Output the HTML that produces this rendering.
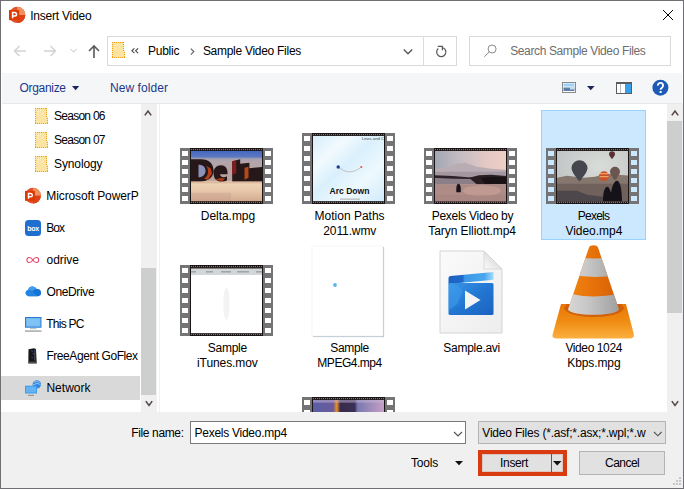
<!DOCTYPE html>
<html>
<head>
<meta charset="utf-8">
<title>Insert Video</title>
<style>
*{box-sizing:border-box;margin:0;padding:0}
html,body{width:684px;height:489px;overflow:hidden;background:#fff}
body{font-family:"Liberation Sans",sans-serif;font-size:12px;color:#000;position:relative}
.abs{position:absolute}
svg{position:absolute;overflow:visible}
.t{position:absolute;white-space:nowrap;line-height:16px;height:16px}
#win{position:absolute;left:0;top:0;width:684px;height:489px;border:1px solid #707074;background:#fff}
#toolbar{position:absolute;left:2px;top:73px;width:680px;height:31px;background:#f5f6f7;border-bottom:1px solid #e6e7e8}
#bottom{position:absolute;left:1px;top:412px;width:682px;height:76px;background:#f0f0f0}
.btn{position:absolute;background:#e1e1e1;border:1px solid #b4b4b4}
</style>
</head>
<body>
<div id="win"></div>
<div id="toolbar"></div>
<div id="bottom"></div>

<!-- title bar -->
<svg style="left:9px;top:7px" width="17" height="17" viewBox="0 0 17 17">
  <circle cx="8.200" cy="7.900" r="8.100" fill="#e2502a"/>
  <path d="M8.200 -.2A8.100 8.100 0 0 1 16.300 7.900H8.200Z" fill="#f0925e"/>
  <path d="M8.200 7.900H16.300A8.100 8.100 0 0 1 8.200 16Z" fill="#dc4418"/>
  <rect x="0" y="3" width="10.200" height="10.200" fill="#de3a04"/>
  <path d="M3.600 11.200V5.600h2.200a1.750 1.750 0 0 1 0 3.500H3.600" fill="none" stroke="#fff" stroke-width="1.500"/>
</svg>
<svg style="left:662px;top:9px" width="12" height="12" viewBox="0 0 12 12"><path d="M1 1L11 11M11 1L1 11" stroke="#000" stroke-width="1" fill="none"/></svg>

<!-- nav row -->
<svg style="left:12px;top:43px" width="92" height="16" viewBox="0 0 92 16" fill="none">
  <path d="M14 8H2.500M7.500 3L2.500 8l5 5" stroke="#d3d3d3" stroke-width="1.500"/>
  <path d="M32 8h11.500M38.500 3l5 5-5 5" stroke="#d3d3d3" stroke-width="1.500"/>
  <path d="M58.500 6l3 3 3-3" stroke="#d8d8d8" stroke-width="1.100"/>
  <path d="M82 15V3M77 8l5-5 5 5" stroke="#5c5c5c" stroke-width="1.650"/>
</svg>
<div class="abs" style="left:107px;top:36px;width:350px;height:30px;border:1px solid #d9d9d9;background:#fff"></div>
<div class="abs" style="left:423px;top:37px;width:1px;height:28px;background:#dcdcdc"></div>
<div class="abs" style="left:469px;top:36px;width:202px;height:30px;border:1px solid #d9d9d9;background:#fff"></div>

<!-- address bar content -->
<svg style="left:111px;top:41px" width="15" height="18" viewBox="0 0 15 18">
  <g transform="translate(1 1)"><g shape-rendering="crispEdges"><path d="M0 0h12v9h1v7H0z" fill="#fbe4a2"/><path d="M0 .5h12M0 15.500h13M.5 0v16M11.500 0v10M12.500 10v6" fill="none" stroke="#f59f1e" stroke-width="1" stroke-dasharray="1 1"/><rect x="3" y="3" width="1" height="1" fill="#fff8dc"/><rect x="5" y="2" width="1" height="1" fill="#fff8dc"/><rect x="7" y="5" width="1" height="1" fill="#fff8dc"/><rect x="3" y="6" width="1" height="1" fill="#fff8dc"/></g></g>
</svg>
<svg style="left:131px;top:48px" width="8" height="6" viewBox="0 0 8 6" fill="none"><path d="M3.400 .4L.9 2.800l2.500 2.400M7.100 .4L4.600 2.800l2.500 2.400" stroke="#4a4a4a" stroke-width="1.150"/></svg>
<svg style="left:190px;top:48px" width="5" height="8" viewBox="0 0 5 8"><path d="M.8 .6l3 3-3 3" fill="none" stroke="#6a6a6a" stroke-width="1.300"/></svg>
<svg style="left:403px;top:48px" width="10" height="8" viewBox="0 0 10 8"><path d="M.8 1.500l4.200 4.200 4.200-4.200" fill="none" stroke="#5a5a5e" stroke-width="1.500"/></svg>
<svg style="left:435px;top:44px" width="14" height="14" viewBox="0 0 14 14" fill="none"><path d="M3.300 4.500A4.600 4.600 0 1 0 8 3.750" stroke="#5a5a5e" stroke-width="1.250"/><path d="M2.700 2.400h4.700v3.900" stroke="#5a5a5e" stroke-width="1.250"/></svg>
<svg style="left:482px;top:44px" width="16" height="14" viewBox="0 0 16 14" fill="none"><circle cx="10.100" cy="5" r="4" stroke="#8c8c8c" stroke-width="1"/><path d="M7.200 8L2.300 12.800" stroke="#8c8c8c" stroke-width="1"/></svg>

<!-- toolbar content -->
<svg style="left:71.800px;top:86.200px" width="8" height="5" viewBox="0 0 8 5"><path d="M0 0h7.200L3.600 4.200z" fill="#1a2560"/></svg>
<svg style="left:562px;top:82px" width="14" height="11" viewBox="0 0 14 11">
  <rect x=".5" y=".5" width="13" height="10" fill="#fff" stroke="#8a8a8a"/>
  <rect x="1.500" y="1.500" width="11" height="3" fill="#9fd0f5"/>
  <rect x="1.500" y="5.500" width="11" height="3.500" fill="#5b7fa8"/>
  <rect x="8" y="4.500" width="4.500" height="3" fill="#c9dcec"/>
</svg>
<svg style="left:586.800px;top:86.200px" width="8" height="5" viewBox="0 0 8 5"><path d="M0 0h7.600L3.800 4.200z" fill="#1a2560"/></svg>
<svg style="left:616px;top:82px" width="16" height="12" viewBox="0 0 16 12">
  <rect x="0" y="0" width="16" height="12" fill="#5d5b5b"/>
  <rect x="1" y="2" width="8.200" height="9" fill="#fff"/>
  <rect x="4.200" y="2" width=".8" height="9" fill="#9fb0bd"/>
  <rect x="9.200" y="2" width="5.800" height="9" fill="#3a9fea"/>
</svg>
<svg style="left:652px;top:79px" width="17" height="17" viewBox="0 0 17 17">
  <circle cx="8.400" cy="8.700" r="8" fill="#1d5bb5"/>
  <path d="M5.900 6.600a2.600 2.600 0 1 1 4 2.100c-.9.600-1.300 1-1.300 2.100" fill="none" stroke="#fff" stroke-width="1.900"/>
  <rect x="7.600" y="12" width="2" height="2" fill="#fff"/>
</svg>

<!-- nav pane -->
<div class="abs" style="left:1px;top:376px;width:139px;height:24px;background:#d9d9d9"></div>
<svg style="left:35px;top:108px" width="14" height="17" viewBox="0 0 14 17"><g shape-rendering="crispEdges"><path d="M0 0h12v9h1v7H0z" fill="#fbe4a2"/><path d="M0 .5h12M0 15.500h13M.5 0v16M11.500 0v10M12.500 10v6" fill="none" stroke="#f59f1e" stroke-width="1" stroke-dasharray="1 1"/><rect x="3" y="3" width="1" height="1" fill="#fff8dc"/><rect x="5" y="2" width="1" height="1" fill="#fff8dc"/><rect x="7" y="5" width="1" height="1" fill="#fff8dc"/><rect x="3" y="6" width="1" height="1" fill="#fff8dc"/></g></svg>
<svg style="left:35px;top:132px" width="14" height="17" viewBox="0 0 14 17"><g shape-rendering="crispEdges"><path d="M0 0h12v9h1v7H0z" fill="#fbe4a2"/><path d="M0 .5h12M0 15.500h13M.5 0v16M11.500 0v10M12.500 10v6" fill="none" stroke="#f59f1e" stroke-width="1" stroke-dasharray="1 1"/><rect x="3" y="3" width="1" height="1" fill="#fff8dc"/><rect x="5" y="2" width="1" height="1" fill="#fff8dc"/><rect x="7" y="5" width="1" height="1" fill="#fff8dc"/><rect x="3" y="6" width="1" height="1" fill="#fff8dc"/></g></svg>
<svg style="left:35px;top:156px" width="14" height="17" viewBox="0 0 14 17"><g shape-rendering="crispEdges"><path d="M0 0h12v9h1v7H0z" fill="#fbe4a2"/><path d="M0 .5h12M0 15.500h13M.5 0v16M11.500 0v10M12.500 10v6" fill="none" stroke="#f59f1e" stroke-width="1" stroke-dasharray="1 1"/><rect x="3" y="3" width="1" height="1" fill="#fff8dc"/><rect x="5" y="2" width="1" height="1" fill="#fff8dc"/><rect x="7" y="5" width="1" height="1" fill="#fff8dc"/><rect x="3" y="6" width="1" height="1" fill="#fff8dc"/></g></svg>
<svg style="left:25px;top:188px" width="16.500" height="16.500" viewBox="0 0 17 17">
  <circle cx="8.200" cy="7.900" r="8.100" fill="#e2502a"/>
  <path d="M8.200 -.2A8.100 8.100 0 0 1 16.300 7.900H8.200Z" fill="#f0925e"/>
  <path d="M8.200 7.900H16.300A8.100 8.100 0 0 1 8.200 16Z" fill="#dc4418"/>
  <rect x="0" y="3" width="10.200" height="10.200" fill="#de3a04"/>
  <path d="M3.600 11.200V5.600h2.200a1.750 1.750 0 0 1 0 3.500H3.600" fill="none" stroke="#fff" stroke-width="1.500"/>
</svg>
<svg style="left:25px;top:220px" width="16" height="16" viewBox="0 0 16 16">
  <rect x="0" y="0" width="16" height="16" rx="3.500" fill="#1f6fd0"/>
  <text x="8" y="10.800" font-family="Liberation Sans" font-size="7" font-weight="bold" fill="#fff" text-anchor="middle" letter-spacing="-.3">box</text>
</svg>
<svg style="left:25px;top:256px" width="16" height="8" viewBox="0 0 16 8" fill="none">
  <path d="M7.800 4C6.600 2 5.600 1.500 4.400 1.500a2.500 2.500 0 0 0 0 5C5.600 6.500 6.600 6 7.800 4s2.200-2.500 3.400-2.500a2.500 2.500 0 0 1 0 5C10 6.500 9 6 7.800 4z" stroke="#e2456c" stroke-width="1.100"/>
</svg>
<svg style="left:25px;top:286px" width="17" height="11" viewBox="0 0 17 11">
  <path d="M3.500 10.300a3.200 3.200 0 0 1-.4-6.300A4.600 4.600 0 0 1 11.700 3 3.700 3.700 0 0 1 13 10.300z" fill="#1573d4"/>
  <path d="M3.100 4A4.600 4.600 0 0 1 11.700 3c-2 0-3.500 1-4.300 2.300C6 4.200 4.500 3.800 3.100 4z" fill="#3e9df0"/>
  <path d="M3.500 10.300a3.200 3.200 0 0 1-.4-6.300c1.500-.2 3 .3 4.300 1.300l5.500 5z" fill="#2a8ae6" opacity=".75"/>
</svg>
<svg style="left:25px;top:317px" width="17" height="15" viewBox="0 0 17 15">
  <rect x=".5" y=".5" width="15.500" height="9.700" fill="#72b9f0" stroke="#2b7dd4"/>
  <rect x="2" y="2" width="12.500" height="6.700" fill="#8cc8f6" opacity=".6"/>
  <rect x="5" y="11.300" width="6.500" height=".9" fill="#9db79d"/>
  <rect x="0" y="13.400" width="16.500" height="1.400" fill="#a3a3a3"/>
</svg>
<svg style="left:28px;top:348px" width="10" height="16" viewBox="0 0 10 16">
  <path d="M.5 1.200L6 .2l2 .8.700 14.600H.3z" fill="#161616"/>
  <rect x=".3" y="13.600" width="8.400" height="1.200" fill="#5a5a5a"/>
  <path d="M3 2.500l2 1M4.500 5.500l1.500 1M3.500 9l1.500 1" stroke="#2d55b0" stroke-width=".8"/>
  <rect x="6.200" y="1.500" width="1.200" height="11" fill="#777" opacity=".55"/>
</svg>
<svg style="left:24px;top:379px" width="18" height="18" viewBox="0 0 18 18">
  <circle cx="12.800" cy="5.400" r="4.200" fill="#2f86e0"/>
  <path d="M9.500 3.500q3-2.500 6 0M9 6q4-3 7.500-.5" fill="none" stroke="#a9d4f8" stroke-width=".8"/>
  <rect x="1" y="6.700" width="12" height="7.800" fill="#3f9bee"/>
  <rect x="2" y="7.700" width="10" height="5.800" fill="#86c6f8" opacity=".55"/>
  <rect x="4" y="15.800" width="6" height="1" fill="#8a8a8a"/>
</svg>
<!-- nav scrollbar -->
<div class="abs" style="left:141px;top:104px;width:16px;height:308px;background:#f0f0f0"></div>
<div class="abs" style="left:141px;top:268px;width:15px;height:127px;background:#cdcfce"></div>
<svg style="left:143.300px;top:108px" width="10" height="8" viewBox="0 0 10 8"><path d="M1.800 7.400L5 3l3.200 4.400" fill="none" stroke="#554a48" stroke-width="1.600"/></svg>
<svg style="left:143.500px;top:400.400px" width="10" height="8" viewBox="0 0 10 8"><path d="M1.800 1.100L5 5.500l3.200-4.400" fill="none" stroke="#554a48" stroke-width="1.600"/></svg>
<div class="abs" style="left:159px;top:104px;width:1px;height:308px;background:#f0f0f0"></div>

<!-- file pane -->
<div class="abs" style="left:541px;top:110px;width:105px;height:130px;background:#cce8ff;border:1px solid #99d1ff"></div>
<svg style="left:180px;top:148px" width="93" height="56" viewBox="0 0 93 56">
<rect x="0" y="0" width="93" height="56" fill="#747375"/>
<rect x="10" y="0" width="73" height="56" fill="#1c1515"/>
<path d="M11 1.500H83M11 54.5H83" stroke="#85776f" stroke-width="1" stroke-dasharray="1 1" shape-rendering="crispEdges" fill="none"/>
<rect x="2" y="3" width="6" height="5" fill="#fff"/>
<rect x="85" y="3" width="6" height="5" fill="#fff"/>
<rect x="2" y="12" width="6" height="5" fill="#fff"/>
<rect x="85" y="12" width="6" height="5" fill="#fff"/>
<rect x="2" y="21" width="6" height="5" fill="#fff"/>
<rect x="85" y="21" width="6" height="5" fill="#fff"/>
<rect x="2" y="30" width="6" height="5" fill="#fff"/>
<rect x="85" y="30" width="6" height="5" fill="#fff"/>
<rect x="2" y="39" width="6" height="5" fill="#fff"/>
<rect x="85" y="39" width="6" height="5" fill="#fff"/>
<rect x="2" y="48" width="6" height="5" fill="#fff"/>
<rect x="85" y="48" width="6" height="5" fill="#fff"/>
<svg x="11" y="2.7" width="71" height="50.5" viewBox="0 0 71 50.5" style="overflow:hidden">
<defs><linearGradient id="gd" x1="0" y1="0" x2="0" y2="1">
<stop offset="0" stop-color="#4568c0"/><stop offset=".12" stop-color="#5b78c2"/><stop offset=".16" stop-color="#a5a2b0"/><stop offset=".22" stop-color="#b3a5aa"/><stop offset=".58" stop-color="#b9a19a"/><stop offset=".61" stop-color="#f0d6b8"/><stop offset=".8" stop-color="#e6c6a8"/><stop offset="1" stop-color="#d3a98e"/></linearGradient></defs>
<rect width="72" height="51" fill="url(#gd)"/>
<path d="M0 8.500h10c8 0 12.500 4.500 12.500 11s-4.500 11.200-12.500 11.200H0zM22.500 22.500c0-5 3-8 7.500-8s7 3.500 6.500 9H29c.3 3 4 3.800 7 2v4.200c-6 3-13.500 1-13.500-7.200zM41.200 10.500l8-2v22.200h-8zM49.200 13l9.200-1v18.700h-9.200zM58.400 17.500l13-1.200v14.400h-13z" fill="#261719"/>
<path d="M7.500 14c4 0 7 2 7 6s-3 6.500-7 6.500z" fill="#8c92b8"/>
<path d="M15 15l4.500 2.500 1.500 5-4 6.500-4-1c3-2 4-4.500 4-7s-.5-4.500-2-6z" fill="#d1451a" opacity=".85"/>
<path d="M41.200 10.500l4-1v13l-4 1.500z" fill="#8c1d1d" opacity=".9"/>
<path d="M53.500 17l4-1v11l-4 2z" fill="#d4571c" opacity=".8"/>
<path d="M24 29l6-2 4 1-3 2.500z" fill="#c83c14" opacity=".8"/>
<rect y="30.700" width="72" height="2" fill="#cfa78f" opacity=".6"/>
<rect y="42" width="40" height="9" fill="#c49a8c" opacity=".35"/>
</svg>
</svg>
<svg style="left:302px;top:133px" width="93" height="71" viewBox="0 0 93 71">
<rect x="0" y="0" width="93" height="71" fill="#747375"/>
<rect x="10" y="0" width="73" height="71" fill="#1c1515"/>
<path d="M11 1.500H83M11 69.5H83" stroke="#85776f" stroke-width="1" stroke-dasharray="1 1" shape-rendering="crispEdges" fill="none"/>
<rect x="2" y="3" width="6" height="5" fill="#fff"/>
<rect x="85" y="3" width="6" height="5" fill="#fff"/>
<rect x="2" y="13" width="6" height="5" fill="#fff"/>
<rect x="85" y="13" width="6" height="5" fill="#fff"/>
<rect x="2" y="23" width="6" height="5" fill="#fff"/>
<rect x="85" y="23" width="6" height="5" fill="#fff"/>
<rect x="2" y="33" width="6" height="5" fill="#fff"/>
<rect x="85" y="33" width="6" height="5" fill="#fff"/>
<rect x="2" y="43" width="6" height="5" fill="#fff"/>
<rect x="85" y="43" width="6" height="5" fill="#fff"/>
<rect x="2" y="53" width="6" height="5" fill="#fff"/>
<rect x="85" y="53" width="6" height="5" fill="#fff"/>
<rect x="2" y="63" width="6" height="5" fill="#fff"/>
<rect x="85" y="63" width="6" height="5" fill="#fff"/>
<svg x="11" y="2.7" width="71" height="65.5" viewBox="0 0 71 65.5" style="overflow:hidden">
<defs><linearGradient id="gm" x1="0" y1="0" x2="1" y2="1">
<stop offset="0" stop-color="#d6eefb"/><stop offset=".25" stop-color="#f2fafe"/><stop offset=".45" stop-color="#d9f0fc"/><stop offset=".7" stop-color="#eef9fe"/><stop offset="1" stop-color="#cfeafa"/></linearGradient></defs>
<rect width="72" height="66" fill="url(#gm)"/>
<path d="M25.300 31.500q11.500 9.500 23 0" fill="none" stroke="#b89aa0" stroke-width=".6"/>
<circle cx="25.200" cy="31.300" r="1.700" fill="#1a3a9a"/>
<circle cx="48.300" cy="31.300" r="1.100" fill="#e8642a"/>
<text x="36.500" y="58.800" font-family="Liberation Sans" font-weight="bold" font-size="8.200" text-anchor="middle" fill="#111" textLength="40" lengthAdjust="spacingAndGlyphs">Arc Down</text>
<text x="71" y="4.800" font-family="Liberation Sans" font-size="4.200" text-anchor="end" fill="#444">Lines and C</text>
<rect x="27" y="63" width="20" height=".8" fill="#999"/>
</svg>
</svg>
<svg style="left:424px;top:148px" width="93" height="56" viewBox="0 0 93 56">
<rect x="0" y="0" width="93" height="56" fill="#747375"/>
<rect x="10" y="0" width="73" height="56" fill="#1c1515"/>
<path d="M11 1.500H83M11 54.5H83" stroke="#85776f" stroke-width="1" stroke-dasharray="1 1" shape-rendering="crispEdges" fill="none"/>
<rect x="2" y="3" width="6" height="5" fill="#fff"/>
<rect x="85" y="3" width="6" height="5" fill="#fff"/>
<rect x="2" y="12" width="6" height="5" fill="#fff"/>
<rect x="85" y="12" width="6" height="5" fill="#fff"/>
<rect x="2" y="21" width="6" height="5" fill="#fff"/>
<rect x="85" y="21" width="6" height="5" fill="#fff"/>
<rect x="2" y="30" width="6" height="5" fill="#fff"/>
<rect x="85" y="30" width="6" height="5" fill="#fff"/>
<rect x="2" y="39" width="6" height="5" fill="#fff"/>
<rect x="85" y="39" width="6" height="5" fill="#fff"/>
<rect x="2" y="48" width="6" height="5" fill="#fff"/>
<rect x="85" y="48" width="6" height="5" fill="#fff"/>
<svg x="11" y="2.7" width="71" height="50.5" viewBox="0 0 71 50.5" style="overflow:hidden">
<defs><linearGradient id="gt1" x1="0" y1="0" x2="1" y2="0">
<stop offset="0" stop-color="#a2a7b3"/><stop offset=".35" stop-color="#c4bcc2"/><stop offset=".7" stop-color="#e3c8c4"/><stop offset="1" stop-color="#f0cfc2"/></linearGradient>
<linearGradient id="gt2" x1="0" y1="0" x2="0" y2="1"><stop offset="0" stop-color="#ab8a86"/><stop offset="1" stop-color="#b48e88"/></linearGradient></defs>
<rect width="72" height="51" fill="url(#gt1)"/>
<path d="M0 18l12-1 9-4 9-1 12 4 14 2 16 1v8H0z" fill="#b9acb2"/>
<path d="M0 21h72v6H0z" fill="#a0939c" opacity=".85"/>
<path d="M0 27.500h44v6H0z" fill="#8d7f88"/>
<path d="M0 24.600l18 .6 18 1.600v1.600l-18-.4-18-.6z" fill="#2f2329"/>
<path d="M34 27l10-2.500 12-.5 16 1.500v8l-30 .300z" fill="#2a1e22"/>
<path d="M46 27l14-1 12 1v6l-22 .500z" fill="#191214"/>
<rect y="33.500" width="72" height="18" fill="url(#gt2)"/>
<path d="M21.300 38c0-3 1-5 2.200-5s2.300 2 2.300 5v3.600h-4.500z" fill="#18131a"/>
<ellipse cx="47" cy="40" rx="19" ry="5.500" fill="#dcb4a2" opacity=".38"/>
<rect x="0" y="44" width="72" height="7" fill="#9a7a78" opacity=".35"/>
</svg>
</svg>
<svg style="left:546px;top:148px" width="93" height="56" viewBox="0 0 93 56">
<rect x="0" y="0" width="93" height="56" fill="#747375"/>
<rect x="10" y="0" width="73" height="56" fill="#1c1515"/>
<path d="M11 1.500H83M11 54.5H83" stroke="#85776f" stroke-width="1" stroke-dasharray="1 1" shape-rendering="crispEdges" fill="none"/>
<rect x="2" y="3" width="6" height="5" fill="#cce8ff"/>
<rect x="85" y="3" width="6" height="5" fill="#cce8ff"/>
<rect x="2" y="12" width="6" height="5" fill="#cce8ff"/>
<rect x="85" y="12" width="6" height="5" fill="#cce8ff"/>
<rect x="2" y="21" width="6" height="5" fill="#cce8ff"/>
<rect x="85" y="21" width="6" height="5" fill="#cce8ff"/>
<rect x="2" y="30" width="6" height="5" fill="#cce8ff"/>
<rect x="85" y="30" width="6" height="5" fill="#cce8ff"/>
<rect x="2" y="39" width="6" height="5" fill="#cce8ff"/>
<rect x="85" y="39" width="6" height="5" fill="#cce8ff"/>
<rect x="2" y="48" width="6" height="5" fill="#cce8ff"/>
<rect x="85" y="48" width="6" height="5" fill="#cce8ff"/>
<svg x="11" y="2.7" width="71" height="50.5" viewBox="0 0 71 50.5" style="overflow:hidden">
<defs><radialGradient id="gp" cx=".6" cy=".3" r=".7"><stop offset="0" stop-color="#d9ddd8"/><stop offset="1" stop-color="#bfc2c4"/></radialGradient></defs>
<rect width="72" height="51" fill="url(#gp)"/>
<path d="M0 27l10-2 16 2 12-1 10-3 24 2v26H0z" fill="#85766e"/>
<path d="M0 33h72v18H0z" fill="#6a5d58" opacity=".8"/>
<path d="M14.500 17a8 8 0 1 1 16 1c-1 5-5 8-7 12h-2c-2-4-7-8-7-13z" fill="#46464f"/>
<circle cx="47" cy="25.500" r="5" fill="#c9522a"/><path d="M43 23h8M42.500 26h9" stroke="#f0a060" stroke-width="1.200"/>
<path d="M53 21a5 5 0 1 1 10 0c0 3-3 5-4 8h-2c-1-3-4-5-4-8z" fill="#6a564f"/>
<path d="M52 3.500a3 3 0 0 1 6 0c0 2-2 3-3 5-1-2-3-3-3-5z" fill="#5b2f33"/>
<path d="M46 51c0-8 1-14 4-15 2 0 3 3 4 6 1-6 3-12 6-12s5 8 5 21z" fill="#15121a"/>
<path d="M0 40h20l10 4 16 2v5H0z" fill="#3f3a44" opacity=".7"/>
</svg>
</svg>
<svg style="left:180px;top:265px" width="93" height="71" viewBox="0 0 93 71">
<rect x="0" y="0" width="93" height="71" fill="#747375"/>
<rect x="10" y="0" width="73" height="71" fill="#1c1515"/>
<path d="M11 1.500H83M11 69.5H83" stroke="#85776f" stroke-width="1" stroke-dasharray="1 1" shape-rendering="crispEdges" fill="none"/>
<rect x="2" y="3" width="6" height="5" fill="#fff"/>
<rect x="85" y="3" width="6" height="5" fill="#fff"/>
<rect x="2" y="13" width="6" height="5" fill="#fff"/>
<rect x="85" y="13" width="6" height="5" fill="#fff"/>
<rect x="2" y="23" width="6" height="5" fill="#fff"/>
<rect x="85" y="23" width="6" height="5" fill="#fff"/>
<rect x="2" y="33" width="6" height="5" fill="#fff"/>
<rect x="85" y="33" width="6" height="5" fill="#fff"/>
<rect x="2" y="43" width="6" height="5" fill="#fff"/>
<rect x="85" y="43" width="6" height="5" fill="#fff"/>
<rect x="2" y="53" width="6" height="5" fill="#fff"/>
<rect x="85" y="53" width="6" height="5" fill="#fff"/>
<rect x="2" y="63" width="6" height="5" fill="#fff"/>
<rect x="85" y="63" width="6" height="5" fill="#fff"/>
<svg x="11" y="2.7" width="71" height="65.5" viewBox="0 0 71 65.5" style="overflow:hidden">
<rect width="72" height="66" fill="#fff"/>
<rect y="0" width="72" height="1" fill="#1c1515"/><rect y="1" width="72" height="6.300" fill="#d3d6d6"/>
<g fill="#8b909a"><rect x="0" y="3.600" width="5" height="1.100"/><rect x="15" y="3.600" width="7" height="1.100"/><rect x="30" y="3.600" width="10" height="1.100"/><rect x="46" y="3.600" width="12" height="1.100"/><rect x="65" y="3.600" width="7" height="1.100"/></g>
<ellipse cx="35.500" cy="36" rx="3.200" ry="16" fill="#f2f3f3"/>
</svg>
</svg>
<svg style="left:311px;top:245px" width="75" height="93" viewBox="0 0 75 93">
<rect x="2.500" y="2.500" width="71" height="90" fill="#f0f2f4"/>
<rect x="2" y="2" width="71" height="90" fill="#a9b9c5"/>
<rect x="1" y="1" width="71" height="90" fill="#fff"/>
<rect x="1" y="1" width="71" height="90" fill="none" stroke="#f1f3f5" stroke-width=".8"/>
<circle cx="24" cy="40" r="1.900" fill="#5ab3ee"/>
</svg>
<svg style="left:439.300px;top:249.600px" width="65" height="85" viewBox="0 0 65 85">
<defs><linearGradient id="ga" x1="0" y1="0" x2="1" y2="1"><stop offset="0" stop-color="#fbfbfb"/><stop offset="1" stop-color="#ededed"/></linearGradient>
<linearGradient id="gf" x1="0" y1="1" x2="1" y2="0"><stop offset="0" stop-color="#fdfdfd"/><stop offset=".5" stop-color="#e2e2e2"/></linearGradient>
<linearGradient id="gb" x1="0" y1="0" x2="1" y2="1"><stop offset="0" stop-color="#3a97e6"/><stop offset=".5" stop-color="#2277d2"/><stop offset="1" stop-color="#1a62c0"/></linearGradient>
<linearGradient id="gc" x1="0" y1="0" x2="1" y2="0"><stop offset="0" stop-color="#1c62c2"/><stop offset=".32" stop-color="#1f6acb"/><stop offset=".36" stop-color="#3a97e6"/><stop offset=".8" stop-color="#49a6ee"/><stop offset="1" stop-color="#a6dbfb"/></linearGradient></defs>
<path d="M1 1h44l18 18v64H1z" fill="url(#ga)" stroke="#d4d4d4" stroke-width="1"/>
<path d="M45 1v18h18z" fill="url(#gf)" stroke="#d4d4d4" stroke-width=".8"/>
<path d="M9.500 28.400c0-1.500.8-2.300 2-2.400l43-4v7.800l-45 4.200z" fill="url(#gc)"/>
<rect x="9.500" y="33" width="45" height="32" rx="1.500" fill="url(#gb)"/>
<path d="M9.500 34c6-1 12 2 14 8l-5 12-9 6z" fill="#3f9cec" opacity=".55"/>
<path d="M26 40.500l15.500 9.500L26 59.500z" fill="#f4f4f4"/>
</svg>
<svg style="left:550px;top:244px" width="86" height="96" viewBox="0 0 86 96">
<defs><linearGradient id="vb" x1="0" y1="0" x2="0" y2="1"><stop offset="0" stop-color="#e8760a"/><stop offset=".5" stop-color="#f08c12"/><stop offset="1" stop-color="#fbb040"/></linearGradient>
<linearGradient id="vo" x1="0" y1="0" x2="1" y2="0"><stop offset="0" stop-color="#f29018"/><stop offset=".45" stop-color="#e8720a"/><stop offset="1" stop-color="#cc5804"/></linearGradient>
<linearGradient id="vw" x1="0" y1="0" x2="1" y2="0"><stop offset="0" stop-color="#dedede"/><stop offset=".4" stop-color="#c6c6c6"/><stop offset="1" stop-color="#929292"/></linearGradient>
<clipPath id="vc"><path d="M39 3.500c1-3 8-3 9 0l21 62c-3 7-48 7-51 0z"/></clipPath></defs>
<path d="M11 60h65l8 31c0 3-3 3.500-5 3.500H7c-3 0-5-1-4.500-3.500z" fill="url(#vb)"/>
<path d="M14 64c3 12 57 12 60 0l-3-4H17z" fill="#c8560a" opacity=".75"/>
<g clip-path="url(#vc)">
<rect x="10" y="0" width="70" height="75" fill="url(#vo)"/>
<path d="M10 10.500q33 8 70 0v17.500q-35 10-70 0z" fill="url(#vw)"/>
<path d="M10 47.500q33 10 70 0v29H10z" fill="url(#vw)"/>
</g>
</svg>
<svg style="left:302px;top:397px" width="93" height="15" viewBox="0 0 93 15">
<defs><clipPath id="c302"><rect x="0" y="0" width="93" height="15"/></clipPath></defs><g clip-path="url(#c302)">
<rect x="0" y="0" width="93" height="71" fill="#747375"/>
<rect x="10" y="0" width="73" height="71" fill="#1c1515"/>
<path d="M11 1.500H83M11 69.5H83" stroke="#85776f" stroke-width="1" stroke-dasharray="1 1" shape-rendering="crispEdges" fill="none"/>
<rect x="2" y="3" width="6" height="5" fill="#fff"/>
<rect x="85" y="3" width="6" height="5" fill="#fff"/>
<rect x="2" y="13" width="6" height="5" fill="#fff"/>
<rect x="85" y="13" width="6" height="5" fill="#fff"/>
<svg x="11" y="2.7" width="71" height="65.5" viewBox="0 0 71 65.5" style="overflow:hidden">
<defs><linearGradient id="g3" x1="0" y1="0" x2="1" y2="0">
<stop offset="0" stop-color="#5a5ea6"/><stop offset=".28" stop-color="#6a5a9a"/><stop offset=".33" stop-color="#e8902a"/><stop offset=".38" stop-color="#3a2a4a"/><stop offset=".58" stop-color="#3a3058"/><stop offset=".62" stop-color="#7a78b0"/><stop offset="1" stop-color="#c9a2c6"/></linearGradient></defs>
<rect width="72" height="66" fill="url(#g3)"/>
<rect width="72" height="3" fill="#c6b6d6" opacity=".5"/>
</svg>
</g>
</svg>
<!-- right scrollbar -->
<div class="abs" style="left:667px;top:104px;width:16px;height:308px;background:#f0f0f0"></div>
<div class="abs" style="left:667px;top:121px;width:15px;height:192px;background:#cdcfce"></div>
<svg style="left:669.600px;top:108px" width="10" height="8" viewBox="0 0 10 8"><path d="M1.800 7.400L5 3l3.200 4.400" fill="none" stroke="#554a48" stroke-width="1.600"/></svg>
<svg style="left:669.600px;top:400.400px" width="10" height="8" viewBox="0 0 10 8"><path d="M1.800 1.100L5 5.500l3.200-4.400" fill="none" stroke="#554a48" stroke-width="1.600"/></svg>

<!-- bottom panel -->
<div class="abs" style="left:190px;top:421px;width:276px;height:23px;background:#fff;border:1px solid #7a7a7a"></div>
<svg style="left:452.500px;top:430.800px" width="10" height="7" viewBox="0 0 10 7"><path d="M1 1l4 4 4-4" fill="none" stroke="#555" stroke-width="1.150"/></svg>
<div class="btn" style="left:478px;top:421px;width:188px;height:23px"></div>
<svg style="left:653px;top:430.500px" width="10" height="7" viewBox="0 0 10 7"><path d="M1 1l3.800 3.800L8.600 1" fill="none" stroke="#555" stroke-width="1.150"/></svg>
<svg style="left:455px;top:461px" width="8" height="5" viewBox="0 0 8 5"><path d="M0 0h8L4 4.200z" fill="#111"/></svg>
<div class="abs" style="left:478px;top:450px;width:89px;height:26px;background:#d83b10"></div>
<div class="abs" style="left:482px;top:454px;width:81px;height:18px;background:#e1e1e1;border:1px solid #dfc4bf"></div>
<div class="abs" style="left:551px;top:454px;width:1px;height:18px;background:#5a5a5a"></div>
<svg style="left:553px;top:461px" width="9" height="5" viewBox="0 0 9 5"><path d="M0 0h8.500L4.250 4.500z" fill="#111"/></svg>
<div class="btn" style="left:579px;top:451px;width:86px;height:24px"></div>
<!-- grip -->
<svg style="left:671px;top:476px" width="11" height="11" viewBox="0 0 11 11" fill="#c6c6c6">
  <rect x="8" y="1" width="2" height="2"/><rect x="5" y="4" width="2" height="2"/><rect x="8" y="4" width="2" height="2"/>
  <rect x="2" y="7" width="2" height="2"/><rect x="5" y="7" width="2" height="2"/><rect x="8" y="7" width="2" height="2"/>
</svg>


<!-- text -->
<div class="t" style="left:30.20px;top:8.0px;color:#000;letter-spacing:-0.221px;">Insert Video</div>
<div class="t" style="left:148.00px;top:43.0px;color:#000;letter-spacing:-0.257px;">Public</div>
<div class="t" style="left:202.90px;top:43.0px;color:#000;letter-spacing:-0.281px;">Sample Video Files</div>
<div class="t" style="left:510.20px;top:43.0px;color:#6d6d6d;letter-spacing:-0.372px;">Search Sample Video Files</div>
<div class="t" style="left:19.60px;top:80.0px;color:#1b388c;letter-spacing:-0.329px;">Organize</div>
<div class="t" style="left:110.00px;top:80.0px;color:#1b388c;letter-spacing:0.071px;">New folder</div>
<div class="t" style="left:54.10px;top:107.5px;color:#000;letter-spacing:-0.749px;">Season 06</div>
<div class="t" style="left:54.10px;top:131.5px;color:#000;letter-spacing:-0.749px;">Season 07</div>
<div class="t" style="left:54.10px;top:155.5px;color:#000;letter-spacing:-0.139px;">Synology</div>
<div class="t" style="left:46.30px;top:187.5px;color:#000;letter-spacing:-0.109px;">Microsoft PowerP</div>
<div class="t" style="left:46.30px;top:219.5px;color:#000;letter-spacing:-0.994px;">Box</div>
<div class="t" style="left:46.60px;top:251.5px;color:#000;letter-spacing:-0.077px;">odrive</div>
<div class="t" style="left:46.40px;top:283.5px;color:#000;letter-spacing:-0.341px;">OneDrive</div>
<div class="t" style="left:46.20px;top:315.5px;color:#000;letter-spacing:-0.731px;">This PC</div>
<div class="t" style="left:46.40px;top:347.5px;color:#000;letter-spacing:-0.423px;">FreeAgent GoFlex</div>
<div class="t" style="left:46.40px;top:379.5px;color:#000;letter-spacing:0.031px;">Network</div>
<div class="t" style="left:200.80px;top:208.0px;color:#000;letter-spacing:-0.038px;">Delta.mpg</div>
<div class="t" style="left:314.60px;top:208.0px;color:#000;letter-spacing:-0.004px;">Motion Paths</div>
<div class="t" style="left:323.30px;top:223.0px;color:#000;letter-spacing:-0.116px;">2011.wmv</div>
<div class="t" style="left:431.75px;top:208.0px;color:#000;letter-spacing:-0.296px;">Pexels Video by</div>
<div class="t" style="left:428.20px;top:223.0px;color:#000;letter-spacing:-0.056px;">Taryn Elliott.mp4</div>
<div class="t" style="left:577.75px;top:208.0px;color:#000;letter-spacing:-0.746px;">Pexels</div>
<div class="t" style="left:565.45px;top:223.0px;color:#000;letter-spacing:-0.032px;">Video.mp4</div>
<div class="t" style="left:207.85px;top:340.0px;color:#000;letter-spacing:-0.277px;">Sample</div>
<div class="t" style="left:197.05px;top:355.0px;color:#000;letter-spacing:-0.098px;">iTunes.mov</div>
<div class="t" style="left:330.35px;top:340.0px;color:#000;letter-spacing:-0.358px;">Sample</div>
<div class="t" style="left:317.35px;top:355.0px;color:#000;letter-spacing:-0.475px;">MPEG4.mp4</div>
<div class="t" style="left:443.35px;top:340.0px;color:#000;letter-spacing:-0.275px;">Sample.avi</div>
<div class="t" style="left:565.45px;top:340.0px;color:#000;letter-spacing:-0.402px;">Video 1024</div>
<div class="t" style="left:567.25px;top:355.0px;color:#000;letter-spacing:-0.104px;">Kbps.mpg</div>
<div class="t" style="left:131.30px;top:425.0px;color:#000;letter-spacing:-0.370px;">File name:</div>
<div class="t" style="left:194.50px;top:425.0px;color:#000;letter-spacing:-0.261px;">Pexels Video.mp4</div>
<div class="t" style="left:482.30px;top:425.0px;color:#000;letter-spacing:-0.199px;">Video Files (*.asf;*.asx;*.wpl;*.w</div>
<div class="t" style="left:411.00px;top:455.0px;color:#000;letter-spacing:-0.179px;">Tools</div>
<div class="t" style="left:500.10px;top:455.0px;color:#000;letter-spacing:-0.363px;">Insert</div>
<div class="t" style="left:605.10px;top:455.0px;color:#000;letter-spacing:-0.532px;">Cancel</div>

</body>
</html>
